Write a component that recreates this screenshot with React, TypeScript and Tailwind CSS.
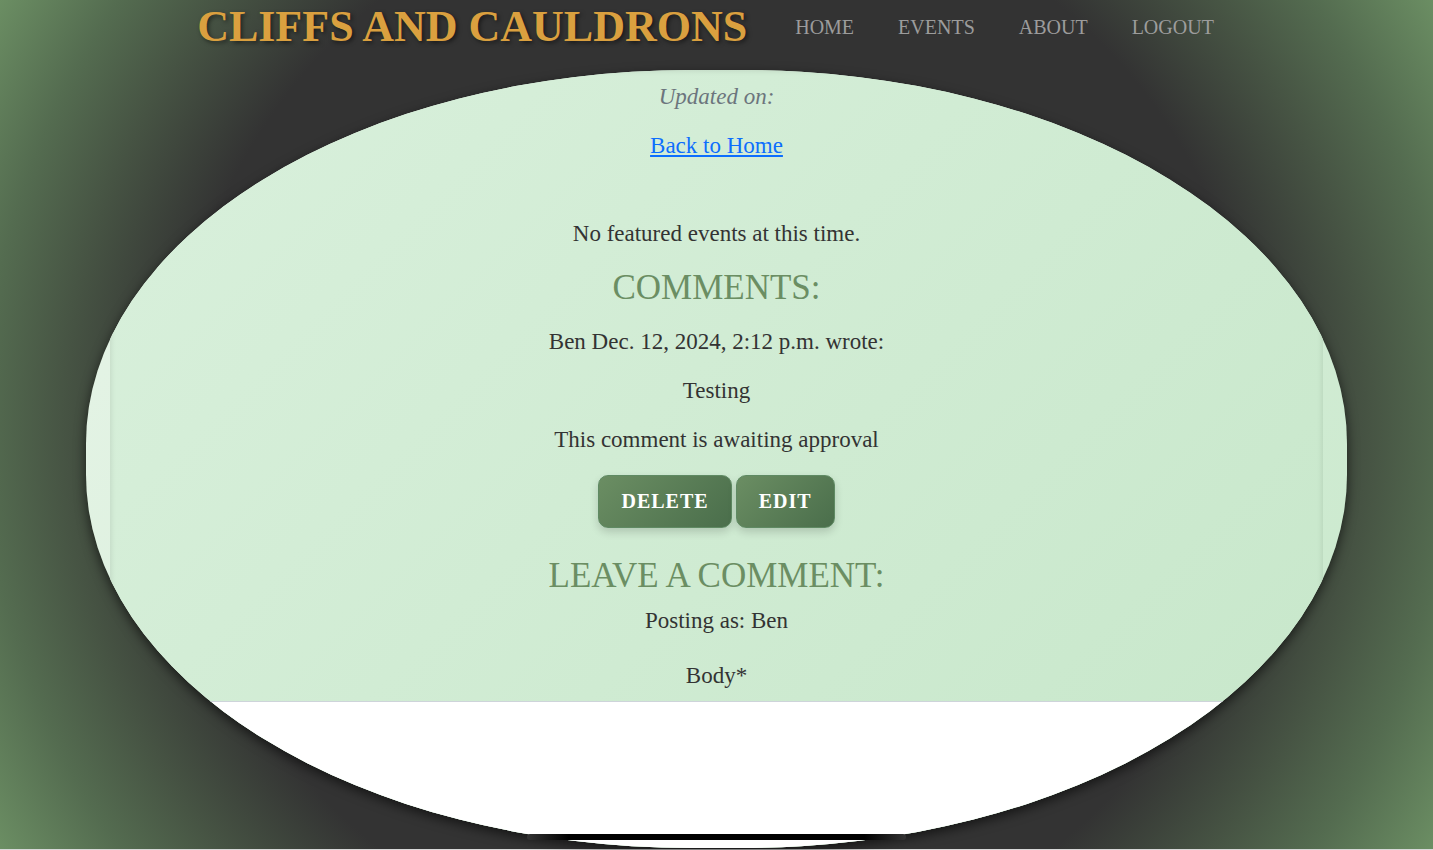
import React from "react";

const navItems = ["Home", "Events", "About", "Logout"];

const buttonClass =
  "h-[53px] rounded-[10px] border border-[#5f8a63] bg-linear-135 from-[#6b8e63] to-[#4a6e4b] px-[22px] pb-[2px] text-[20px] leading-[30px] font-bold tracking-[1px] uppercase text-white shadow-[0_4px_8px_rgba(0,0,0,0.16)]";

const headingClass = "text-[35px] leading-[42px] uppercase text-[#6b8e63]";

export default function App() {
  return (
    <div className="min-h-screen border-b border-[#d8d8d8] bg-[radial-gradient(circle_farthest-corner,#333333_65%,#465343_78%,#546c50_88%,#6b8e63_100%)] font-['Liberation_Serif',serif] text-[#333333]">
      <header className="flex h-[70px] items-start justify-center gap-12 pr-[22px]">
        <a
          href="#home"
          className="text-[44px] leading-[54px] font-bold whitespace-nowrap text-[#daa03f] uppercase [text-shadow:2px_2px_4px_rgba(0,0,0,0.5)]"
        >
          Cliffs and Cauldrons
        </a>
        <nav className="flex gap-11 text-[20px] leading-[54px] text-[#9c9c9c] uppercase">
          {navItems.map((item) => (
            <a key={item} href={`#${item.toLowerCase()}`}>
              {item}
            </a>
          ))}
        </nav>
      </header>

      <main className="relative mx-[6%]">
        <div className="overflow-hidden rounded-[48%] bg-linear-135 from-[#e8f5e9] to-[#c8e8cb] px-6 shadow-[0_4px_12px_rgba(0,0,0,0.6)]">
          <div className="bg-linear-135 from-[#d9f0dc] to-[#c7e7ca] text-center text-[23px] leading-[30px] shadow-[inset_0_0_6px_rgba(0,0,0,0.12)]">
            <p className="pt-3 text-[#6c757d] italic">Updated on:</p>
            <p className="mt-[19px]">
              <a href="#home" className="text-[#0d6efd] underline">
                Back to Home
              </a>
            </p>
            <p className="mt-[58px]">No featured events at this time.</p>

            <h2 className={`mt-[18px] ${headingClass}`}>Comments:</h2>
            <p className="mt-[18px]">Ben Dec. 12, 2024, 2:12 p.m. wrote:</p>
            <p className="mt-[19px]">Testing</p>
            <p className="mt-[19px]">This comment is awaiting approval</p>
            <div className="mt-5 flex justify-center gap-1">
              <button type="button" className={buttonClass}>
                Delete
              </button>
              <button type="button" className={buttonClass}>
                Edit
              </button>
            </div>

            <h2 className={`mt-[27px] ${headingClass}`}>Leave a comment:</h2>
            <p className="mt-[9px]">Posting as: Ben</p>
            <form>
              <label htmlFor="body" className="mt-[25px] block">
                Body*
              </label>
              <textarea
                id="body"
                name="body"
                required
                className="mt-[10px] block h-[147px] w-full resize-none border-t border-[#ced4da] bg-white outline-none"
              />
            </form>
          </div>
        </div>
        <div className="absolute inset-x-[35%] bottom-2 h-[6px] rounded-sm bg-[linear-gradient(to_right,#333333,#000000_11%,#000000_89%,#333333)]" />
      </main>
    </div>
  );
}
